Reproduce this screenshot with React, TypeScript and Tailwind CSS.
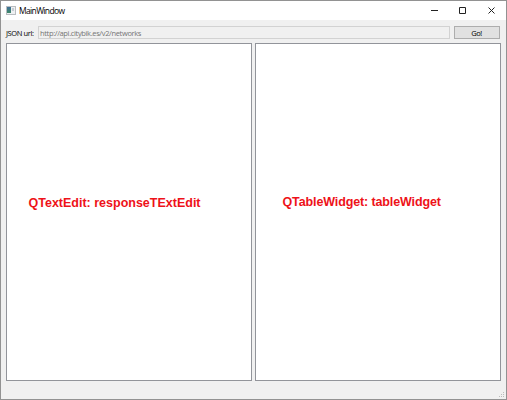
import React from 'react';

function AppIcon() {
  return (
    <svg width="10" height="9" viewBox="0 0 10 9" shapeRendering="crispEdges">
      <defs>
        <linearGradient id="pane" x1="0" y1="0" x2="0" y2="1">
          <stop offset="0" stopColor="#3f6f98" />
          <stop offset="1" stopColor="#3f8a68" />
        </linearGradient>
      </defs>
      <rect width="10" height="9" fill="#b9bdc0" />
      <rect x="1" y="1" width="8" height="7" fill="#eef0f2" />
      <rect x="1" y="1" width="4" height="6" fill="url(#pane)" />
      <rect x="6" y="2" width="2" height="3" fill="#c5ccd3" />
    </svg>
  );
}

function TitleBar() {
  return (
    <header className="flex h-[19px] shrink-0 items-center bg-white pl-[5px]">
      <AppIcon />
      <span className="ml-[3px] text-[8.5px] leading-[17px] tracking-[-0.65px] text-black">MainWindow</span>
      <svg className="ml-auto mr-[10px]" width="66" height="9" viewBox="0 0 66 9" fill="none" stroke="#222">
        <path d="M1 4.5H8" />
        <path d="M29.5 1.5h6v6h-6z" />
        <path d="M58.5 1.5l6 6M64.5 1.5l-6 6" />
      </svg>
    </header>
  );
}

function Panel({ label, className }: { label: string; className: string }) {
  return (
    <section className="h-[338px] w-[246px] border border-[#92949a] bg-white">
      <p className={`whitespace-nowrap font-['Liberation_Sans',Arial,sans-serif] text-[12.5px] font-bold leading-4 text-[#ee1219] ${className}`}>
        {label}
      </p>
    </section>
  );
}

export default function App() {
  return (
    <div className="relative flex h-[400px] w-[507px] flex-col overflow-hidden border border-[#929292] bg-[#f0f0f0] font-['Open_Sans','Noto_Sans',sans-serif]">
      <TitleBar />
      <div className="mt-[6px] flex h-[13px] shrink-0 items-center pl-[5px]">
        <label className="w-[32px] shrink-0 whitespace-nowrap pt-px text-[7.5px] leading-[13px] tracking-[-0.4px] text-black">JSON url:</label>
        <div className="flex h-[13px] w-[412px] items-center border border-[#d2d2d2] pl-[1px] pt-px text-[7.5px] leading-[11px] tracking-[-0.35px] text-[#757575]">
          http://api.citybik.es/v2/networks
        </div>
        <button className="ml-[4px] h-[13px] w-[46px] border border-[#adadad] bg-[#e1e1e1] pr-px pt-px text-[7.5px] leading-[11px] tracking-[-0.4px] text-black">Go!</button>
      </div>
      <main className="mt-[4px] flex gap-[3px] pl-[5px]">
        <Panel label="QTextEdit: responseTExtEdit" className="mt-[151px] ml-[21.5px]" />
        <Panel label="QTableWidget: tableWidget" className="mt-[150px] ml-[26.5px] tracking-[-0.12px]" />
      </main>
      <svg className="absolute bottom-[1px] right-[1px]" width="7" height="6" viewBox="0 0 7 6" fill="#bcbcbc">
        <path d="M5 0h1v1H5zM3 2h1v1H3zM5 2h1v1H5zM1 4h1v1H1zM3 4h1v1H3zM5 4h1v1H5z" />
      </svg>
    </div>
  );
}
